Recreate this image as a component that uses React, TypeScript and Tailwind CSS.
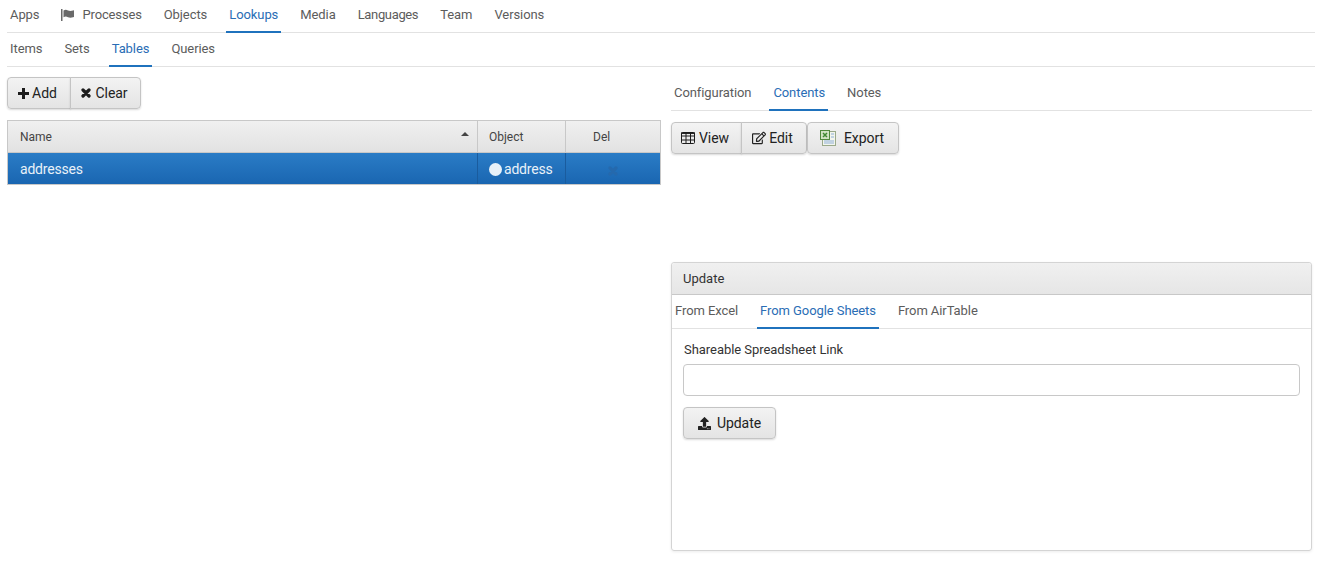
import { FaRegEdit, FaUpload } from "react-icons/fa";
import type { ReactNode } from "react";

const btn =
  "flex items-center h-[32px] border border-[#c4c4c4] bg-gradient-to-b from-[#f3f3f3] to-[#e4e4e4] text-[14px] text-[#222] tracking-[-0.05px] shadow-[0_1px_2px_rgba(0,0,0,0.15)]";

// One tab: text plus the 2px blue underline when it is active
function Tab({ label, active, icon, h, px = "px-[3px]", extra = "tracking-[-0.08px]" }: { label: string; active?: boolean; icon?: ReactNode; h: string; px?: string; extra?: string }) {
  return (
    <div
      className={`flex items-center ${h} ${px} ${extra} border-b-2 -mb-px text-[13px] ${
        active ? "border-[#1f72bd] text-[#2a6db5]" : "border-transparent text-[#5c5c5c]"
      }`}
    >
      {icon}
      {label}
    </div>
  );
}

function FlagIcon() {
  return (
    <svg width="13" height="12" viewBox="0 0 13 12" className="mr-[8px] text-[#6a6a6a]" fill="currentColor">
      <rect x="0" y="0" width="1.500" height="12" />
      <path d="M2.500 1.500c2-1 3-.7 4.500 0s3 .7 6-.2V8c-3 .9-4.500.9-6 .2s-2.500-1-4.500 0z" />
    </svg>
  );
}

function PlusIcon() {
  return (
    <svg width="11" height="11" viewBox="0 0 11 11" className="mr-[3px]" fill="#1c1c1c">
      <path d="M4 0h3v4h4v3H7v4H4V7H0V4h4z" />
    </svg>
  );
}

function CrossIcon({ className = "mr-[4px]", color = "#1c1c1c" }: { className?: string; color?: string }) {
  return (
    <svg width="10" height="10" viewBox="0 0 10 10" className={className}>
      <path d="M2 2l6 6M8 2l-6 6" stroke={color} strokeWidth="3.200" strokeLinecap="round" />
    </svg>
  );
}

function GridIcon() {
  return (
    <svg width="14" height="12" viewBox="0 0 14 12" className="mr-[4px]" fill="none" stroke="#1c1c1c">
      <rect x="0.500" y="0.500" width="13" height="11" rx="1" strokeWidth="1" />
      <path d="M0 4h14M0 8h14M5 0v12M9.500 0v12" strokeWidth="1" />
      <path d="M0 1.200h14" strokeWidth="1.500" />
    </svg>
  );
}

function ExcelIcon() {
  return (
    <svg width="16" height="16" viewBox="0 0 16 16" className="mr-[8px]">
      <rect x="2.500" y="1.500" width="13" height="14" fill="#f2f5ee" stroke="#9aa98a" />
      <rect x="0.500" y="0.500" width="9" height="9" fill="#cfe3c2" stroke="#4f8a3c" />
      <path d="M3 3l4 4M7 3l-4 4" stroke="#3f8a32" strokeWidth="1.500" />
      <path d="M11 4h3M11 7h3M4 11h10M4 13h10" stroke="#8fb0d6" strokeWidth="1.200" />
    </svg>
  );
}

export default function App() {
  return (
    <div className="h-[568px] w-[1335px] overflow-hidden bg-white pl-[7px] font-['Roboto',sans-serif]">
      <div className="w-[1308px]">
        {/* Top nav */}
        <div className="flex gap-[16px] border-b border-[#e2e2e2] h-[33px]">
          <Tab h="h-[33px]" extra="pb-[2px] tracking-[-0.08px]" label="Apps" />
          <Tab h="h-[33px]" extra="pb-[2px] tracking-[-0.15px]" label="Processes" icon={<FlagIcon />} />
          <Tab h="h-[33px]" extra="pb-[2px] tracking-[-0.08px]" label="Objects" />
          <Tab h="h-[33px]" extra="pb-[2px] tracking-[-0.08px]" label="Lookups" active />
          <Tab h="h-[33px]" extra="pb-[2px] tracking-[-0.08px]" label="Media" />
          <Tab h="h-[33px]" extra="pb-[2px] tracking-[-0.35px]" label="Languages" />
          <Tab h="h-[33px]" extra="pb-[2px] tracking-[-0.08px]" label="Team" />
          <Tab h="h-[33px]" extra="pb-[2px] tracking-[-0.08px]" label="Versions" />
        </div>
        <div className="flex gap-[16px] border-b border-[#e2e2e2] h-[34px]">
          <Tab h="h-[34px]" label="Items" />
          <Tab h="h-[34px]" label="Sets" />
          <Tab h="h-[34px]" label="Tables" active />
          <Tab h="h-[34px]" label="Queries" />
        </div>
      </div>

      <div className="flex gap-[10px]">
        {/* Left column: table list */}
        <div className="w-[654px] pt-[10px]">
          <div className="flex">
            <div className={`${btn} w-[64px] justify-center rounded-l-[4px] pr-[3px]`}>
              <PlusIcon />
              Add
            </div>
            <div className={`${btn} w-[71px] justify-center rounded-r-[4px] -ml-px pr-[2px]`}>
              <CrossIcon />
              Clear
            </div>
          </div>
          <div className="mt-[11px] border border-[#c8c8c8]">
            <div className="flex h-[32px] items-center border-b border-[#c8c8c8] bg-gradient-to-b from-[#f0f0f0] to-[#e2e2e2] text-[12px] text-[#444]">
              <div className="relative flex h-full w-[470px] items-center border-r border-[#c8c8c8] pl-[12px]">
                Name
                <span className="absolute right-[8px] top-[11px] h-0 w-0 border-x-[4px] border-b-[4px] border-x-transparent border-b-[#444]" />
              </div>
              <div className="flex h-full w-[88px] items-center border-r border-[#c8c8c8] pl-[11px]">Object</div>
              <div className="flex-1 pl-[27px]">Del</div>
            </div>
            <div className="flex h-[31px] items-center bg-gradient-to-b from-[#2a7cc6] to-[#1a66b1] text-[14px] tracking-[-0.2px] text-[#e8f1f8]">
              <div className="flex h-full w-[470px] items-center border-r border-[#1a5c9e] pl-[12px] pt-[2px]">addresses</div>
              <div className="flex h-full w-[88px] items-center border-r border-[#1a5c9e] pl-[11px] pt-[2px]">
                <span className="mr-[2px] h-[13px] w-[13px] rounded-full bg-[#e8f1f8]" />
                address
              </div>
              <div className="flex flex-1 justify-center">
                <CrossIcon className="mt-[4px]" color="#2569ad" />
              </div>
            </div>
          </div>
        </div>

        {/* Right column: contents and update panel */}
        <div className="w-[641px]">
          <div className="flex h-[44px] gap-[15px] border-b border-[#e2e2e2]">
            <Tab h="h-[44px]" extra="pt-[10px] tracking-[-0.08px]" label="Configuration" />
            <Tab h="h-[44px]" extra="pt-[10px] tracking-[-0.08px]" label="Contents" active px="pl-[4px] pr-[3px]" />
            <Tab h="h-[44px]" extra="pt-[10px] tracking-[-0.08px]" label="Notes" px="px-[4px]" />
          </div>
          <div className="mt-[11px] flex">
            <div className={`${btn} w-[71px] justify-center rounded-l-[4px] pr-[3px]`}>
              <GridIcon />
              View
            </div>
            <div className={`${btn} w-[66px] justify-center rounded-r-[4px] -ml-px pr-[3px]`}>
              <FaRegEdit className="mr-[3px] text-[14px]" />
              Edit
            </div>
            <div className={`${btn} w-[92px] justify-center rounded-[4px] pr-[2px]`}>
              <ExcelIcon />
              Export
            </div>
          </div>

          <div className="mt-[108px] h-[289px] rounded-[3px] border border-[#d4d4d4] shadow-[0_1px_3px_rgba(0,0,0,0.08)]">
            <div className="flex h-[32px] items-center rounded-t-[3px] border-b border-[#c8c8c8] bg-gradient-to-b from-[#f0f0f0] to-[#e6e6e6] pl-[11px] text-[13px] text-[#333]">
              Update
            </div>
            <div className="flex h-[34px] gap-[16px] border-b border-[#e2e2e2]">
              <Tab h="h-[34px]" label="From Excel" />
              <Tab h="h-[34px]" label="From Google Sheets" active />
              <Tab h="h-[34px]" label="From AirTable" />
            </div>
            <div className="px-[11px]">
              <div className="mt-[13px] pl-px text-[13px] leading-[16px] tracking-[-0.05px] text-[#333]">Shareable Spreadsheet Link</div>
              <input className="mt-[6px] block h-[32px] w-[617px] rounded-[4px] border border-[#c8c8c8] bg-white" />
              <div className={`${btn} mt-[11px] w-[93px] justify-center rounded-[4px]`}>
                <FaUpload className="mr-[6px] text-[13px]" />
                Update
              </div>
            </div>
          </div>
        </div>
      </div>
    </div>
  );
}
